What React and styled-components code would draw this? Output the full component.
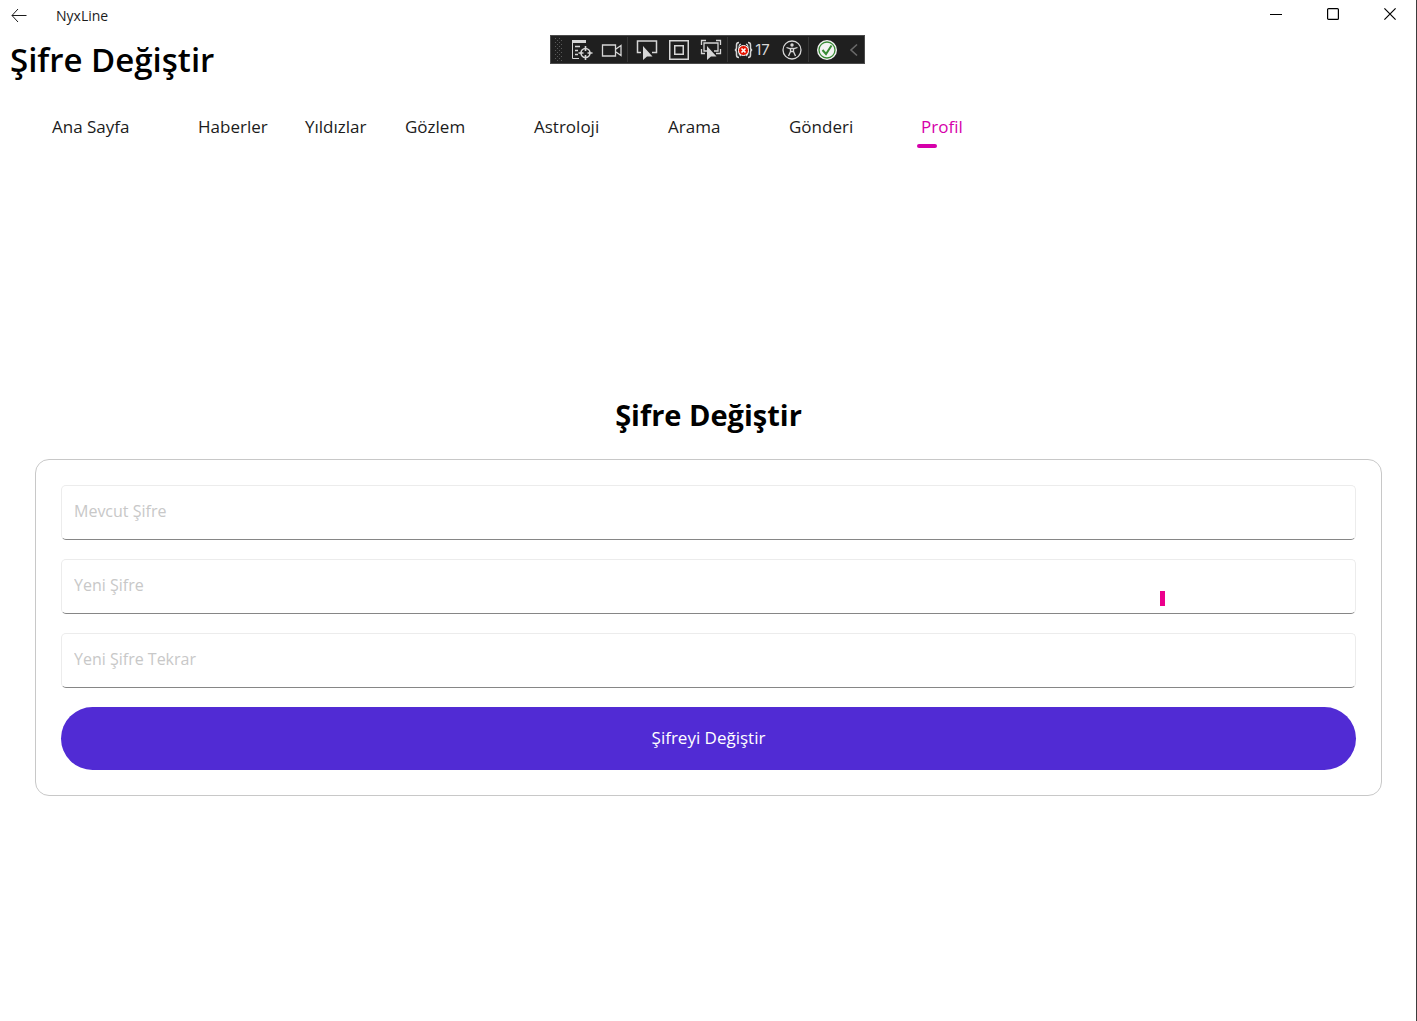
import React from "react";
import styled, { createGlobalStyle } from "styled-components";

const GlobalStyle = createGlobalStyle`
  * { box-sizing: border-box; }
  body {
    margin: 0;
    background: #ffffff;
    color: #1b1b1b;
    font-family: "Segoe UI", "Open Sans", "Noto Sans", sans-serif;
  }
  button, input { font: inherit; }
`;

const Page = styled.div`
  position: relative;
  display: flex;
  flex-direction: column;
  min-height: 100vh;
  border-right: 1px solid #3c3c3c;
`;

const TitleBar = styled.header`
  display: flex;
  align-items: center;
  height: 30px;
`;

const PlainButton = styled.button`
  display: flex;
  flex-shrink: 0;
  align-items: center;
  justify-content: center;
  padding: 0;
  border: 0;
  background: transparent;
  color: inherit;
`;

const BackButton = styled(PlainButton)`
  width: 38px;
  height: 30px;
`;

const AppName = styled.span`
  flex: 1;
  padding: 2px 0 0 18px;
  font-size: 14px;
  line-height: 30px;
`;

const WindowButton = styled(PlainButton)`
  width: 57px;
  height: 28px;
  color: #000000;
`;

const WindowControls = styled.div`
  display: flex;
  align-self: flex-start;
  margin-right: -2px;
`;

const PageTitle = styled.h1`
  margin: 0;
  padding: 6px 10px 0;
  color: #000000;
  font-size: 33px;
  line-height: 48px;
  font-weight: 600;
`;

const Tabs = styled.nav`
  display: grid;
  grid-template-columns: 146px 107px 100px 129px 134px 121px 132px auto;
  justify-content: start;
  padding: 26px 52px 0;
`;

const Tab = styled.a`
  display: flex;
  flex-direction: column;
  height: 40px;
  color: ${({ $active }) => ($active ? "#d600aa" : "#1b1b1b")};
  font-size: 17px;
  line-height: 34px;
  white-space: nowrap;
  text-decoration: none;

  &::after {
    content: "";
    width: 20px;
    height: 4px;
    margin-left: -4px;
    border-radius: 2px;
    background: ${({ $active }) => ($active ? "#d600aa" : "transparent")};
  }
`;

const DebugBar = styled.div`
  position: absolute;
  top: 35px;
  left: calc(50% - 158px);
  display: flex;
  align-items: center;
  width: 315px;
  height: 29px;
  padding: 0 0 0 4px;
  border: 1px solid #4b4b4b;
  background: #1f1f1f;
  color: #d6d6d6;
`;

const Tool = styled(PlainButton)`
  width: ${({ $width }) => $width || 32}px;
  height: 27px;
  gap: 2px;
  font-family: Inter, sans-serif;
  font-size: 15px;
`;

const Divider = styled.span`
  flex-shrink: 0;
  width: 1px;
  height: 25px;
  margin: 0 ${({ $space }) => $space || 0}px;
  background: #363636;
`;

const Content = styled.main`
  flex: 1;
  display: flex;
  flex-direction: column;
  justify-content: center;
  gap: 24px;
  padding: 20px 34px 0 35px;
`;

const FormTitle = styled.h2`
  margin: 0;
  color: #000000;
  font-size: 29px;
  line-height: 40px;
  font-weight: 700;
  text-align: center;
`;

const Card = styled.form`
  display: flex;
  flex-direction: column;
  gap: 18px;
  padding: 25px;
  border: 1px solid #c8c8c8;
  border-radius: 14px;
`;

const Field = styled.div`
  position: relative;
  display: flex;
  padding-bottom: 1px;
`;

const Input = styled.input`
  flex: 1;
  min-width: 0;
  height: 55px;
  padding: 0 12px 3px;
  border: 1px solid #ececec;
  border-bottom-color: #868686;
  border-radius: 5px;
  background: #ffffff;
  color: #1b1b1b;
  font-size: 16px;
  outline: none;

  &::placeholder { color: #c8c8c8; opacity: 1; }
`;

const Marker = styled.span`
  position: absolute;
  right: 191px;
  bottom: 9px;
  width: 5px;
  height: 15px;
  background: #ec008c;
`;

const Submit = styled.button`
  height: 63px;
  padding: 0 20px 2px;
  border: 0;
  border-radius: 32px;
  background: #512bd4;
  color: #ffffff;
  font-size: 17px;
`;

const Icon = ({ w = 22, h = 22, children, ...rest }) => (
  <svg width={w} height={h} viewBox={`0 0 ${w} ${h}`} fill="none" stroke="currentColor" aria-hidden="true" {...rest}>
    {children}
  </svg>
);

const pointer = "M0 0V14L4 10.5H9.5Z";

const GripIcon = () => (
  <Icon w={9} h={23} stroke="none" fill="#5a5a5a">
    {[0, 1, 2, 3, 4, 5].map((r) => (
      <g key={r}>
        <rect x="0" y={r * 4} width="1" height="1" />
        <rect x="4" y={r * 4} width="1" height="1" />
        <rect x="2" y={r * 4 + 2} width="1" height="1" />
        <rect x="6" y={r * 4 + 2} width="1" height="1" />
      </g>
    ))}
  </Icon>
);

const TreeIcon = () => (
  <Icon>
    <path d="M1 2.5H15" strokeWidth="3" />
    <path d="M1.5 3V19.5H8" />
    <path d="M4 7.5H9M4 11.5H7M4 15.5H7" strokeWidth="1.5" />
    <circle cx="14.5" cy="14" r="4.5" strokeWidth="1.6" />
    <path d="M14.5 7V12M14.5 16V21M7.5 14H12.5M16.5 14H21.5" strokeWidth="1.6" />
  </Icon>
);

const CameraIcon = () => (
  <Icon>
    <path d="M1.5 6H14.5V17H1.5ZM15 10L20 6.500V16.500L15 13" strokeWidth="1.3" />
  </Icon>
);

const SelectIcon = () => (
  <Icon>
    <path d="M5 13.500H1.500V2H20.500V13.500H16" strokeWidth="1.5" />
    <path d={pointer} transform="translate(7 7)" fill="currentColor" stroke="none" />
  </Icon>
);

const AdornerIcon = () => (
  <Icon>
    <rect x="1.750" y="1.750" width="18.500" height="18.500" strokeWidth="1.5" />
    <rect x="6.750" y="6.750" width="8.500" height="8.500" strokeWidth="1.5" />
  </Icon>
);

const FocusIcon = () => (
  <Icon>
    <path d="M1.500 6V1.500H6M16 1.500H20.500V6M20.500 10V14.500H16M1.500 10V14.500H5" strokeWidth="1.3" />
    <path d="M7 12H4V4H18V12H14" strokeWidth="1.3" />
    <path d={pointer} transform="translate(7 7)" fill="currentColor" stroke="none" />
  </Icon>
);

const BindingIcon = () => (
  <Icon w={19} h={18}>
    <path d="M5 1.500C3 1.500 2.500 2.500 2.500 4V6.500C2.500 8 2 9 .8 9 2 9 2.500 10 2.500 11.500V14C2.500 15.500 3 16.500 5 16.500M14 1.500C16 1.500 16.500 2.500 16.500 4V6.500C16.500 8 17 9 18.200 9 17 9 16.500 10 16.500 11.500V14C16.500 15.500 16 16.500 14 16.500" strokeWidth="1.5" />
    <path d="M7 3.200C5.500 3.500 5 4.500 5 6V12C5 13.500 5.500 14.500 7 14.800M12 3.200C13.500 3.500 14 4.500 14 6V12C14 13.500 13.500 14.500 12 14.800" strokeWidth="1.2" />
    <circle cx="9.500" cy="9.500" r="5" fill="#e51400" stroke="#ffffff" strokeWidth="1" />
    <path d="M7.500 7.500L11.500 11.500M11.500 7.500L7.500 11.500" stroke="#ffffff" strokeWidth="1.7" />
  </Icon>
);

const AccessIcon = () => (
  <Icon>
    <circle cx="11" cy="11" r="9" strokeWidth="1.3" />
    <circle cx="11" cy="6" r="1.7" fill="currentColor" stroke="none" />
    <path d="M5.500 8.500L9.500 9.800V12.500L7.500 17M16.500 8.500L12.500 9.800V12.500L14.500 17M9.500 9.500H12.500M9.500 12.500H12.500" strokeWidth="1.3" />
  </Icon>
);

const CheckIcon = () => (
  <Icon>
    <circle cx="11" cy="11" r="10" fill="#f4f4f4" stroke="none" />
    <circle cx="11" cy="11" r="8" stroke="#388a34" strokeWidth="1.3" />
    <path d="M6.500 11L10 15L15.500 6.500" stroke="#388a34" strokeWidth="2" />
  </Icon>
);

const ChevronIcon = () => (
  <Icon w={9} h={14} stroke="#6a6a6a">
    <path d="M8 1.500L2 7L8 12.500" strokeWidth="1.6" />
  </Icon>
);

const tabs = ["Ana Sayfa", "Haberler", "Yıldızlar", "Gözlem", "Astroloji", "Arama", "Gönderi", "Profil"];

const fields = [
  { id: "current", label: "Mevcut Şifre" },
  { id: "next", label: "Yeni Şifre", marker: true },
  { id: "repeat", label: "Yeni Şifre Tekrar" },
];

export default function App() {
  return (
    <>
      <GlobalStyle />
      <Page>
        <TitleBar>
          <BackButton type="button" aria-label="Geri">
            <Icon w={16} h={14}>
              <path d="M15.500 7.500H1M7 1L1 7.500L7 14" />
            </Icon>
          </BackButton>
          <AppName>NyxLine</AppName>
          <WindowControls>
            <WindowButton type="button" aria-label="Simge durumuna küçült">
              <Icon w={12} h={12}><path d="M0 6.500H12" /></Icon>
            </WindowButton>
            <WindowButton type="button" aria-label="Ekranı kapla">
              <Icon w={12} h={12}><rect x=".6" y=".6" width="10.800" height="10.800" rx="1" strokeWidth="1.2" /></Icon>
            </WindowButton>
            <WindowButton type="button" aria-label="Kapat">
              <Icon w={12} h={12}><path d="M.4 .4L11.600 11.600M11.600 .4L.4 11.600" strokeWidth="1.2" /></Icon>
            </WindowButton>
          </WindowControls>
        </TitleBar>

        <PageTitle>Şifre Değiştir</PageTitle>

        <Tabs>
          {tabs.map((tab) => (
            <Tab key={tab} href="#" $active={tab === "Profil"}>{tab}</Tab>
          ))}
        </Tabs>

        <DebugBar role="toolbar">
          <GripIcon />
          <Tool type="button" $width={36} aria-label="Canlı görsel ağaç"><TreeIcon /></Tool>
          <Tool type="button" $width={24} aria-label="Kamera"><CameraIcon /></Tool>
          <Divider $space={3} />
          <Tool type="button" aria-label="Öğe seç"><SelectIcon /></Tool>
          <Tool type="button" aria-label="Düzen çizgileri"><AdornerIcon /></Tool>
          <Tool type="button" aria-label="Odağı izle"><FocusIcon /></Tool>
          <Divider />
          <Tool type="button" $width={48}><BindingIcon />17</Tool>
          <Tool type="button" aria-label="Erişilebilirlik"><AccessIcon /></Tool>
          <Divider />
          <Tool type="button" $width={36} aria-label="Çalışırken yeniden yükle"><CheckIcon /></Tool>
          <Tool type="button" $width={16} aria-label="Daralt"><ChevronIcon /></Tool>
        </DebugBar>

        <Content>
          <FormTitle>Şifre Değiştir</FormTitle>
          <Card onSubmit={(e) => e.preventDefault()}>
            {fields.map(({ id, label, marker }) => (
              <Field key={id}>
                <Input id={id} type="password" placeholder={label} aria-label={label} />
                {marker && <Marker />}
              </Field>
            ))}
            <Submit type="submit">Şifreyi Değiştir</Submit>
          </Card>
        </Content>
      </Page>
    </>
  );
}
